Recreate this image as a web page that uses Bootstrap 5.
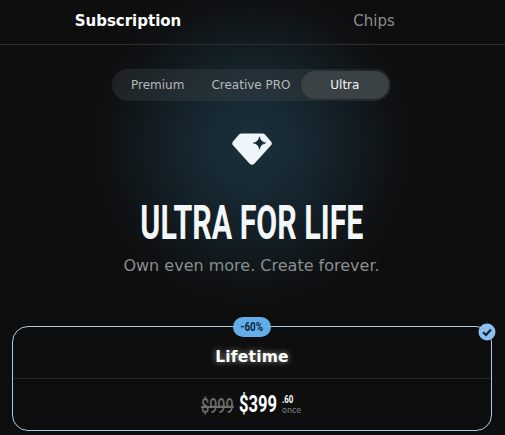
<!DOCTYPE html>
<html lang="en">
<head>
<meta charset="utf-8">
<title>Ultra for life</title>
<link href="https://cdn.jsdelivr.net/npm/bootstrap@5.3.0/dist/css/bootstrap.min.css" rel="stylesheet">
<style>
html,body{height:100%;overflow:hidden}
body{background:#0e0e0e;font-family:"DejaVu Sans",sans-serif;color:#fff}
.screen{height:435px;overflow:hidden;background:radial-gradient(ellipse 165px 165px at 252px 145px,#1b303a 0%,#172832 30%,#121d23 60%,#0f1214 85%,#0e0e0e 100%)}
.tabbar{height:45px;border-bottom:1px solid #2a2c2d;padding:0 8px 2px 5px}
.tabitem{flex:1 1 0;display:flex;align-items:center;justify-content:center;font-size:15px;color:#8b8d8f}
.tabitem.on{color:#fff;font-weight:700}
.plans{margin:24px 0 0 112px;height:32px;width:279px;padding:2px;background:rgba(78,86,90,.27);border-radius:16px}
.planitem{height:28px;display:flex;align-items:center;justify-content:center;font-size:12px;color:#b4b8ba;border-radius:14px}
.p1{width:88px}
.p2{width:100px}
.p3{width:89px;background:#3b4246;color:#f4f6f7}
.gem{margin-top:31px;height:34px;padding-right:1px}
.headline{margin:37px 0 0;height:40px;padding-right:2px;display:flex;justify-content:center;align-items:center;font-family:"Roboto",sans-serif;font-weight:700;font-size:49px;line-height:40px;color:#f3f7fa}
.headline span{display:inline-block;transform:scaleX(.62);white-space:nowrap}
.tagline{margin-top:13px;padding-right:2px;text-align:center;font-size:16px;line-height:20px;color:#898d8f}
.offer{margin:50px 13px 0 12px;height:105px;border:1px solid #a9cbe6;border-radius:16px;position:relative}
.deal{position:absolute;top:-10px;left:50%;transform:translateX(-50%);width:38px;height:20px;border-radius:10px;background:#63ade9;color:#0a2740;display:flex;align-items:center;justify-content:center;font-family:"Roboto",sans-serif;font-size:13px;font-weight:700}
.deal span{display:inline-block;transform:scaleX(.76)}
.tick{position:absolute;top:-4px;right:-5px;display:block}
.offername{height:52px;padding-top:10px;border-bottom:1px solid #262829;display:flex;align-items:center;justify-content:center;font-size:15.5px;font-weight:700;color:#fff;text-shadow:0 0 6px rgba(255,255,255,.55);letter-spacing:.2px}
.pricing{height:51px;padding:2px 2px 0 0;font-family:"Roboto",sans-serif}
.pricing .old,.pricing .now{display:inline-block;transform:scaleX(.72);transform-origin:left center;white-space:nowrap}
.pricing .old{font-size:20px;font-weight:500;color:#6d6d6d;text-decoration:line-through;width:32px}
.pricing .now{font-size:23px;font-weight:700;color:#fff;width:38px;margin-left:6px}
.fraction{display:flex;flex-direction:column;gap:3px;width:19px;margin-left:5px;line-height:9px}
.fraction b{font-size:10.5px;line-height:8px;font-weight:700;color:#fff;display:inline-block;transform:scaleX(.75);transform-origin:left}
.fraction i{font-style:normal;font-family:"DejaVu Sans",sans-serif;font-size:8px;line-height:8px;color:#85888a}
</style>
</head>
<body>
<div class="screen">
  <div class="tabbar d-flex">
    <div class="tabitem on">Subscription</div>
    <div class="tabitem">Chips</div>
  </div>
  <div class="plans d-flex">
    <div class="planitem p1">Premium</div>
    <div class="planitem p2">Creative PRO</div>
    <div class="planitem p3">Ultra</div>
  </div>
  <div class="gem d-flex justify-content-center">
    <svg width="40" height="34" viewBox="0 0 40 34" aria-hidden="true">
      <path d="M9.5 1.5H30.5Q32 1.5 33 2.6L39 9.5Q40.5 11.5 39 13.2L22.3 31.7Q20 34 17.7 31.7L1 13.2Q-.5 11.5 1 9.5L7 2.6Q8 1.5 9.5 1.5Z" fill="#eef6fb"/>
      <path d="M27.5 4.8Q28.3 9.9 33.7 11Q28.3 12.1 27.5 17.2Q26.7 12.1 21.3 11Q26.7 9.9 27.5 4.8Z" fill="#172a33" stroke="#172a33" stroke-width=".6"/>
    </svg>
  </div>
  <h1 class="headline"><span>ULTRA FOR LIFE</span></h1>
  <div class="tagline">Own even more. Create forever.</div>
  <div class="offer">
    <div class="deal"><span>-60%</span></div>
    <svg class="tick" width="18" height="18" viewBox="0 0 18 18" aria-hidden="true">
      <circle cx="9" cy="9" r="8.5" fill="#8cc0ef"/>
      <path d="M5 9.2L8 12L13 6.4" fill="none" stroke="#0d2238" stroke-width="2.2"/>
    </svg>
    <div class="offername">Lifetime</div>
    <div class="pricing d-flex align-items-center justify-content-center">
      <span class="old">$999</span>
      <span class="now">$399</span>
      <span class="fraction"><b>.60</b><i>once</i></span>
    </div>
  </div>
</div>
<script src="https://cdn.jsdelivr.net/npm/bootstrap@5.3.0/dist/js/bootstrap.bundle.min.js"></script>
</body>
</html>
